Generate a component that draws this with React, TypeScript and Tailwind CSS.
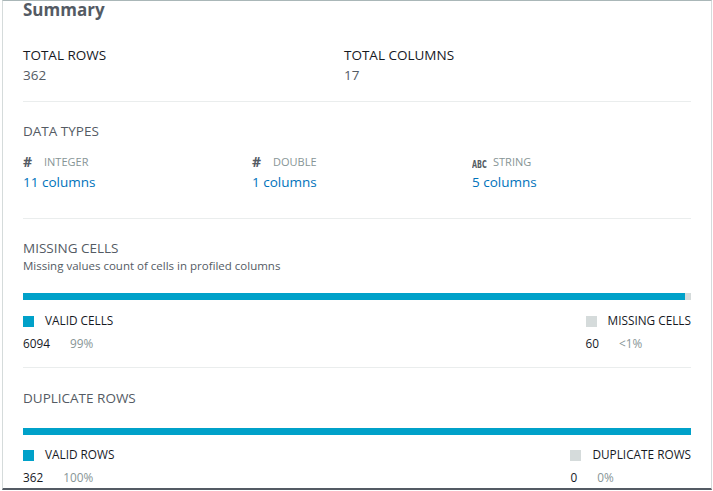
import type { ReactNode } from "react";

const font = { fontFamily: "'Open Sans', 'Liberation Sans', sans-serif" };

function TypeIcon({ kind }: { kind: "num" | "abc" }) {
  if (kind === "abc") {
    return (
      <span className="inline-block w-[21px]">
        <span
          className="inline-block origin-left scale-x-[0.72] text-[10px] font-bold leading-none text-[#545b64]"
          style={{ fontFamily: "'DejaVu Sans Condensed', 'DejaVu Sans', sans-serif" }}
        >
          ABC
        </span>
      </span>
    );
  }
  return <span className="inline-block w-[21px] text-[14px] font-bold leading-none text-[#545b64]">#</span>;
}

function DataType({ kind, label, count }: { kind: "num" | "abc"; label: string; count: string }) {
  return (
    <div>
      <div className="flex h-[16px] items-center">
        <TypeIcon kind={kind} />
        <span className="text-[11px] text-[#879596]">{label}</span>
      </div>
      <p className="mt-[2px] text-[13.5px] leading-[20px] text-[#0073bb]">{count}</p>
    </div>
  );
}

function Legend({
  swatch,
  label,
  value,
  percent,
}: {
  swatch: string;
  label: string;
  value: string;
  percent: string;
}) {
  return (
    <div>
      <div className="flex h-[14px] items-center">
        <span className={`h-[11px] w-[11px] ${swatch}`} />
        <span className="ml-[11px] text-[11.8px] text-[#16191f]">{label}</span>
      </div>
      <div className="mt-[7px] flex text-[11.8px] leading-[16px]">
        <span className="text-[#16191f]">{value}</span>
        <span className="ml-[20px] text-[#879596]">{percent}</span>
      </div>
    </div>
  );
}

function Section({ children, last = false }: { children: ReactNode; last?: boolean }) {
  return <div className={last ? "" : "border-b border-[#eaeded]"}>{children}</div>;
}

export default function App() {
  return (
    <div className="h-[491px] w-[713px] overflow-hidden bg-white" style={font}>
      <div className="ml-[2px] h-[490px] w-[710px] border-x border-t border-b-2 border-x-[#d5dbdb] border-t-[#aab7b8] border-b-[#545b64] px-5">
        <h1 className="text-[17px] font-bold leading-[18px] text-[#545b64]">Summary</h1>

        <Section>
          <div className="grid grid-cols-[321px_1fr] pt-[26px] pb-[16px] text-[13.5px] leading-[20px]">
            <div>
              <p className="text-[#16191f]">TOTAL ROWS</p>
              <p className="text-[#545b64]">362</p>
            </div>
            <div>
              <p className="text-[#16191f]">TOTAL COLUMNS</p>
              <p className="text-[#545b64]">17</p>
            </div>
          </div>
        </Section>

        <Section>
          <div className="pt-[19px] pb-[26px]">
            <p className="text-[13.5px] leading-[20px] text-[#545b64]">DATA TYPES</p>
            <div className="mt-[13px] grid grid-cols-[229px_220px_1fr]">
              <DataType kind="num" label="INTEGER" count="11 columns" />
              <DataType kind="num" label="DOUBLE" count="1 columns" />
              <DataType kind="abc" label="STRING" count="5 columns" />
            </div>
          </div>
        </Section>

        <Section>
          <div className="pt-[19px] pb-[16px]">
            <p className="text-[13.5px] leading-[20px] text-[#545b64]">MISSING CELLS</p>
            <p className="text-[11.5px] leading-[16px] text-[#545b64]">Missing values count of cells in profiled columns</p>
            <div className="mt-[19px] flex h-[7px]">
              <div className="h-full bg-[#00a1c9]" style={{ width: "99.1%" }} />
              <div className="h-full flex-1 bg-[#d5dbdb]" />
            </div>
            <div className="mt-[14px] flex justify-between">
              <Legend swatch="bg-[#00a1c9]" label="VALID CELLS" value="6094" percent="99%" />
              <Legend swatch="bg-[#d5dbdb]" label="MISSING CELLS" value="60" percent="<1%" />
            </div>
          </div>
        </Section>

        <Section last>
          <div className="pt-[20px]">
            <p className="text-[13.5px] leading-[20px] text-[#545b64]">DUPLICATE ROWS</p>
            <div className="mt-[20px] flex h-[7px]">
              <div className="h-full w-full bg-[#00a1c9]" />
            </div>
            <div className="mt-[13px] flex justify-between">
              <Legend swatch="bg-[#00a1c9]" label="VALID ROWS" value="362" percent="100%" />
              <Legend swatch="bg-[#d5dbdb]" label="DUPLICATE ROWS" value="0" percent="0%" />
            </div>
          </div>
        </Section>
      </div>
    </div>
  );
}
